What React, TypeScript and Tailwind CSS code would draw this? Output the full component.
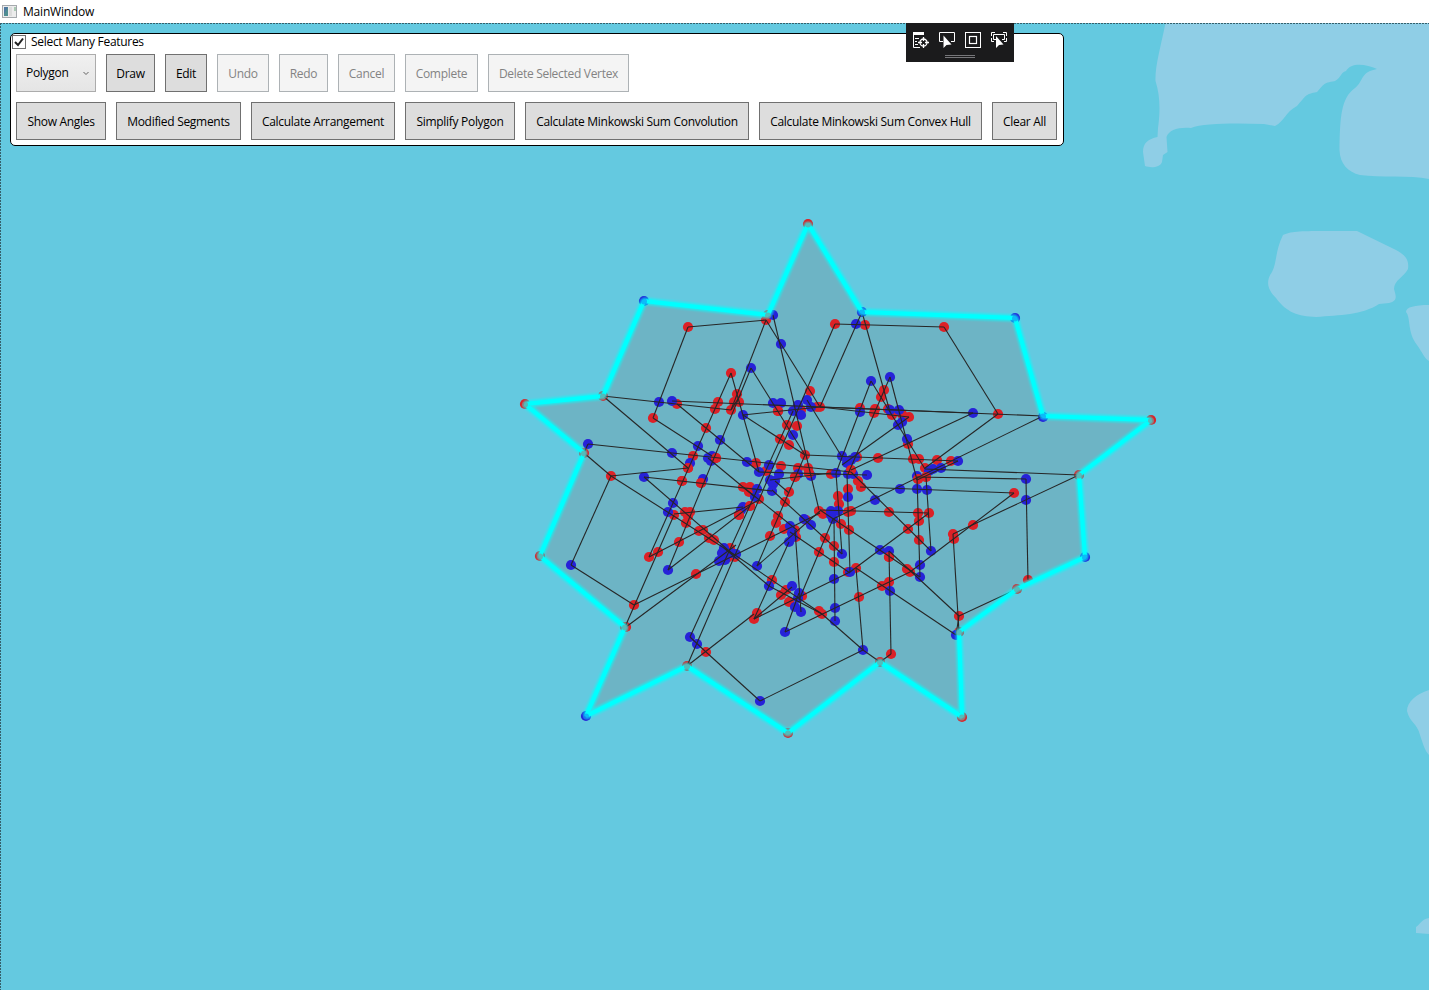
import { ReactNode } from 'react';

type Pt = [number, number];

const outline: Pt[] = [
  [808, 224], [862, 312], [1015, 318], [1043, 416], [1151, 420], [1079, 475], [1085, 557],
  [1017, 589], [959, 632], [962, 717], [880, 662], [788, 733], [687, 666], [586, 716],
  [625, 627], [540, 556], [584, 453], [525, 404], [603, 396], [644, 301], [768, 315],
];

const red: Pt[] = [
  [808, 224], [1151, 420], [1079, 475], [1017, 589], [959, 632], [962, 717], [880, 662], [788, 733],
  [687, 666], [625, 627], [540, 556], [584, 453], [525, 404], [603, 396], [768, 315],
  [688, 327], [653, 418], [677, 404], [766, 320], [835, 324], [865, 325], [944, 327], [998, 414],
  [731, 373], [737, 394], [718, 402], [734, 402], [739, 402], [715, 409], [731, 410], [706, 428],
  [693, 456], [688, 468], [716, 458], [682, 481], [701, 483], [743, 487], [750, 487], [749, 492],
  [759, 499], [756, 463], [766, 471], [781, 466], [798, 468], [808, 468], [795, 477], [809, 473],
  [805, 455], [789, 445], [780, 439], [787, 425], [797, 426], [778, 411], [810, 391], [789, 492],
  [785, 502], [817, 407], [820, 407], [801, 410], [860, 408], [875, 409], [874, 413], [884, 390],
  [881, 397], [892, 415], [909, 417], [902, 414], [888, 409], [857, 457], [878, 458], [908, 444],
  [913, 459], [919, 459], [937, 460], [951, 461], [925, 468], [918, 479], [926, 477], [851, 470],
  [831, 474], [858, 481], [861, 487], [848, 489], [838, 496], [839, 504], [674, 515], [685, 512],
  [690, 512], [688, 516], [686, 523], [679, 542], [699, 531], [703, 530], [709, 538], [714, 540],
  [649, 557], [658, 552], [696, 574], [634, 605], [739, 515], [750, 506], [730, 548], [735, 557],
  [727, 558], [770, 536], [776, 523], [778, 516], [784, 529], [772, 580], [781, 595], [786, 590],
  [789, 602], [757, 613], [754, 619], [802, 596], [796, 537], [795, 530], [819, 511], [823, 514],
  [851, 511], [848, 512], [841, 524], [849, 530], [825, 538], [834, 546], [819, 552], [834, 562],
  [856, 568], [848, 572], [859, 597], [882, 586], [889, 582], [889, 557], [907, 569], [910, 572],
  [919, 540], [908, 529], [919, 521], [918, 513], [929, 513], [889, 512], [953, 534], [954, 539],
  [973, 525], [959, 616], [819, 611], [822, 614], [806, 520], [611, 476], [706, 652], [626, 627],
  [891, 654], [1014, 493], [1028, 580],
];

const blue: Pt[] = [
  [862, 312], [1015, 318], [1043, 417], [1085, 557], [586, 716], [644, 301], [956, 635],
  [773, 315], [781, 344], [856, 324], [659, 402], [672, 401], [751, 368], [743, 415], [773, 403],
  [781, 403], [798, 405], [793, 411], [801, 415], [807, 400], [811, 407], [793, 435], [720, 440],
  [698, 446], [672, 453], [644, 477], [690, 463], [708, 458], [712, 456], [711, 461], [703, 479],
  [747, 462], [759, 472], [769, 465], [779, 474], [770, 480], [775, 481], [773, 484], [772, 491],
  [757, 489], [755, 497], [798, 474], [811, 476], [673, 503], [871, 381], [890, 377], [860, 412],
  [973, 413], [890, 410], [899, 410], [898, 425], [902, 422], [907, 439], [842, 456], [855, 457],
  [847, 463], [851, 460], [836, 473], [848, 474], [853, 474], [867, 475], [958, 461], [941, 468],
  [933, 469], [929, 471], [917, 476], [900, 489], [917, 489], [927, 490], [875, 500], [848, 497],
  [668, 512], [668, 570], [743, 507], [741, 510], [724, 548], [722, 553], [719, 561], [725, 560],
  [736, 554], [731, 553], [757, 566], [769, 586], [792, 586], [799, 593], [798, 598], [795, 607],
  [801, 612], [790, 526], [792, 533], [789, 542], [793, 537], [804, 519], [811, 525], [831, 511],
  [838, 511], [833, 519], [831, 515], [842, 554], [880, 550], [889, 551], [931, 551], [920, 565],
  [920, 577], [850, 572], [834, 579], [835, 608], [835, 621], [890, 591], [588, 444], [571, 565],
  [690, 637], [697, 644], [785, 632], [760, 701], [863, 650], [1026, 479], [1026, 500],
];

/* Red nodes that sit on top of neighbouring blue ones in crowded spots. */
const redFront: Pt[] = [
  [716, 458], [851, 470], [688, 468], [701, 483], [795, 477], [809, 473], [682, 481], [739, 515],
  [926, 477], [918, 479], [889, 557], [750, 506], [778, 411],
];

const segments: [number, number, number, number][] = [
  [688, 327, 766, 320], [688, 327, 653, 418], [603, 396, 731, 410], [672, 401, 1043, 416],
  [603, 396, 688, 468], [653, 418, 712, 456], [677, 404, 759, 472], [611, 476, 688, 468],
  [588, 444, 851, 472], [611, 476, 735, 555], [735, 555, 822, 614], [644, 477, 772, 491],
  [644, 477, 735, 556], [731, 373, 649, 557], [751, 368, 668, 570], [766, 320, 731, 410],
  [741, 394, 731, 410], [731, 373, 759, 472], [751, 368, 805, 455], [743, 415, 805, 455],
  [743, 415, 820, 407], [773, 315, 819, 510], [766, 320, 820, 407], [835, 324, 687, 666],
  [793, 411, 690, 637], [862, 312, 820, 407], [805, 455, 757, 566], [807, 400, 842, 457],
  [871, 381, 836, 473], [871, 381, 925, 469], [890, 377, 848, 474], [890, 377, 917, 480],
  [862, 312, 890, 412], [835, 324, 944, 327], [944, 327, 998, 414], [998, 414, 925, 468],
  [973, 413, 851, 470], [820, 407, 973, 413], [820, 407, 909, 417], [909, 417, 842, 465],
  [1043, 416, 833, 519], [805, 455, 958, 461], [759, 472, 867, 475], [770, 480, 831, 473],
  [1079, 475, 925, 469], [1026, 479, 917, 477], [1014, 493, 860, 487], [1026, 479, 1028, 580],
  [1079, 475, 953, 534], [1014, 493, 910, 572], [910, 572, 785, 632], [953, 534, 959, 632],
  [917, 477, 920, 577], [926, 477, 931, 551], [931, 551, 851, 472], [820, 510, 929, 513],
  [929, 513, 850, 572], [820, 510, 920, 577], [889, 551, 959, 616], [856, 568, 956, 635],
  [889, 551, 891, 654], [856, 568, 863, 650], [863, 650, 760, 701], [834, 519, 835, 621],
  [847, 474, 850, 572], [836, 473, 842, 554], [772, 490, 842, 554], [743, 487, 797, 530],
  [708, 458, 755, 497], [958, 461, 917, 480], [833, 519, 799, 600], [790, 532, 850, 573],
  [795, 530, 801, 612], [850, 572, 754, 619], [754, 619, 792, 587], [649, 557, 759, 500],
  [668, 570, 750, 506], [634, 605, 820, 513], [626, 627, 736, 545], [674, 514, 743, 507],
  [757, 566, 820, 511], [785, 632, 799, 593], [789, 542, 754, 619], [706, 652, 760, 701],
  [690, 637, 706, 652], [687, 666, 754, 614], [571, 565, 611, 476], [571, 565, 634, 605],
  [674, 515, 625, 627], [584, 453, 611, 476], [584, 453, 588, 444], [959, 616, 1017, 589],
  [822, 614, 863, 650], [863, 650, 880, 662], [724, 548, 769, 586], [769, 586, 822, 614],
  [880, 662, 891, 654], [956, 635, 959, 616], [789, 493, 775, 481],
];

const outlinePoints = outline.map((p) => p.join(',')).join(' ');

const near = ([ax, ay]: Pt, [bx, by]: Pt) => Math.abs(ax - bx) < 2 && Math.abs(ay - by) < 2;

function Nodes({ points, fill }: { points: Pt[]; fill: string }) {
  return (
    <g fill={fill}>
      {points.map(([x, y], i) => (
        <circle key={i} cx={x} cy={y} r="5.100" />
      ))}
    </g>
  );
}

function MapView() {
  return (
    <svg className="absolute inset-0 block" width="1429" height="967" viewBox="0 23 1429 967">
      <defs>
        <filter id="glow" x="-5%" y="-5%" width="110%" height="110%">
          <feGaussianBlur stdDeviation="1.2" />
        </filter>
      </defs>
      <g fill="#8fcee6">
        <path d="M1165.500 23C1160 50 1155 66 1155.500 81C1160 95 1160.500 110 1158 128L1157.500 137C1148 139 1143 143 1143 152L1145 166C1150 168 1160 168 1162 162L1163 155L1167.500 152L1166.500 137C1169 130 1178 127 1191 128C1203 123 1236 123 1264 124L1275 126C1285 121 1285 112 1297 106C1306 96 1305 94 1317 92C1324 85 1322 83 1335 81C1342 77 1340 73 1346 71C1351 62 1366 64 1377 69C1360 72 1364 81 1355 88C1341 98 1340 117 1339.500 150C1340 164 1348 172 1360 175C1380 178 1410 175 1429 179V23Z" />
        <path d="M1283 235C1292 230 1310 231 1357 231L1396 250C1407 256 1409 261 1408 269C1404 277 1394 280 1394 289C1396 296 1398 301 1389 303L1379 304C1362 315 1340 315 1316 317C1298 316 1287 313 1276 298C1268 290 1265 282 1272 272C1277 263 1275 251 1283 235Z" />
        <path d="M1429 305C1415 305 1406 307 1406 312C1411 318 1407 332 1417 345C1422 352 1425 359 1429 361Z" />
        <path d="M1429 690C1416 694 1407 702 1407 711C1410 723 1417 723 1420 735C1423 744 1425 751 1429 755Z" />
        <path d="M1429 918C1420 920 1421 924 1416 927V933L1429 934Z" />
      </g>
      <polygon points={outlinePoints} fill="#6db4c5" />
      <Nodes points={red} fill="#dc2127" />
      <Nodes points={blue} fill="#2622d8" />
      <Nodes points={redFront} fill="#dc2127" />
      <g stroke="#262626" strokeWidth="1.100">
        {segments.map(([x1, y1, x2, y2], i) => (
          <line key={i} x1={x1} y1={y1} x2={x2} y2={y2} />
        ))}
      </g>
      <polygon points={outlinePoints} fill="none" stroke="#00ffff" strokeOpacity="0.7" strokeWidth="7" strokeLinejoin="bevel" filter="url(#glow)" />
      <polygon points={outlinePoints} fill="none" stroke="#00ffff" strokeWidth="4" strokeLinejoin="bevel" />
      {outline.map((p, i) => (
        <circle
          key={i}
          cx={p[0]}
          cy={p[1] + 0.5}
          r="3"
          fill={blue.some((b) => near(b, p)) ? '#1496f4' : '#7d9a98'}
          fillOpacity="0.65"
        />
      ))}
      <path d="M0 23.500H1429M.5 23V990" fill="none" stroke="#35606b" strokeDasharray="2 1" />
    </svg>
  );
}

function Button({ w, disabled, children }: { w: string; disabled?: boolean; children: ReactNode }) {
  return (
    <button
      disabled={disabled}
      className={`${w} h-[38px] shrink-0 border pt-px whitespace-nowrap ${
        disabled ? 'border-[#adb2b5] bg-[#f4f4f4] text-[#838383]' : 'border-[#707070] bg-[#dddddd] text-black'
      }`}
    >
      {children}
    </button>
  );
}

function DebugBar() {
  return (
    <div className="absolute top-0 left-[906px] h-[39px] w-[108px] bg-[#1b1b1c]">
      <svg width="108" height="39" viewBox="906 23 108 39" fill="none" stroke="#fff" strokeWidth="1">
        <path d="M913 32H924V35H913Z" fill="#fff" stroke="none" />
        <path d="M913.500 33V47.500H920M915 38.500H919M915 41.500H917M915 44.500H918" />
        <circle cx="923.500" cy="42.500" r="3.500" strokeWidth="1.300" />
        <path d="M923.500 37V41M923.500 44V48M918 42.500H922M925 42.500H929" strokeWidth="1.300" />
        <path d="M943 41.500H939.500V32.500H954.500V41.500H951" />
        <path d="M943.500 35.500V48L946.500 45L951.500 44.500Z" fill="#fff" stroke="none" />
        <rect x="965.500" y="32.500" width="15" height="15" />
        <rect x="969.500" y="36.500" width="7" height="7" strokeWidth="1.200" />
        <path d="M991.500 36V32.500H995M1003 32.500H1006.500V36M991.500 38V41.500H994M1006.500 38V41.500H1004M996 39.500H993.500V34.500H1004.500V39.500H1002" />
        <path d="M996 36V48L999 45L1003.500 44.500Z" fill="#fff" stroke="none" />
        <path d="M945 55.500H975M945 57.500H975" stroke="#77777a" />
      </svg>
    </div>
  );
}

export default function App() {
  return (
    <div className="flex h-[990px] w-[1429px] flex-col overflow-hidden bg-white font-['Open_Sans','Noto_Sans',sans-serif] text-[12px] leading-4 tracking-[-0.3px] text-black">
      <header className="flex h-[23px] shrink-0 items-center gap-[5px] pl-[2px] tracking-[-0.2px]">
        <svg width="16" height="14" viewBox="0 0 16 14">
          <rect x=".5" y=".5" width="14" height="12" fill="#ececec" stroke="#a5a9ad" />
          <rect x="2" y="2" width="4" height="9" fill="#4f8d91" />
          <path d="M2 2H6L2 9Z" fill="#4e78a0" />
          <path d="M7 2H10V11H7Z" fill="#dcdcdc" />
          <path d="M13 2V6" stroke="#69a77c" />
        </svg>
        <span>MainWindow</span>
      </header>
      <main className="relative flex-1 bg-[#64c9e0] pt-[10px] pl-[10px]">
        <MapView />
        <section className="relative h-[113px] w-[1054px] rounded-[5px] border border-black bg-white">
          <label className="flex h-4 items-center gap-[5px] pl-px">
            <svg width="14" height="14" viewBox="0 0 14 14" fill="none">
              <rect x=".5" y=".5" width="13" height="13" fill="#fff" stroke="#707070" />
              <path d="M3 7L6 10L11 3.500" stroke="#212121" strokeWidth="2" />
            </svg>
            <span>Select Many Features</span>
          </label>
          <div className="mt-[4px] ml-[5px] flex gap-[10px]">
            <button className="flex h-[38px] w-[80px] shrink-0 items-center justify-between border border-[#acacac] bg-linear-to-b from-[#f0f0f0] to-[#e5e5e5] pr-[6px] pl-[9px]">
              <span>Polygon</span>
              <svg width="6" height="5" viewBox="0 0 6 5" fill="none" stroke="#606060">
                <path d="M.5 1L3 3.500L5.500 1" />
              </svg>
            </button>
            <Button w="w-[49px]">Draw</Button>
            <Button w="w-[42px]">Edit</Button>
            <Button w="w-[52px]" disabled>Undo</Button>
            <Button w="w-[49px]" disabled>Redo</Button>
            <Button w="w-[57px]" disabled>Cancel</Button>
            <Button w="w-[73px]" disabled>Complete</Button>
            <Button w="w-[141px]" disabled>Delete Selected Vertex</Button>
          </div>
          <div className="mt-[10px] ml-[5px] flex gap-[10px]">
            <Button w="w-[90px]">Show Angles</Button>
            <Button w="w-[125px]">Modified Segments</Button>
            <Button w="w-[144px]">Calculate Arrangement</Button>
            <Button w="w-[110px]">Simplify Polygon</Button>
            <Button w="w-[224px]">Calculate Minkowski Sum Convolution</Button>
            <Button w="w-[223px]">Calculate Minkowski Sum Convex Hull</Button>
            <Button w="w-[65px]">Clear All</Button>
          </div>
        </section>
        <DebugBar />
      </main>
    </div>
  );
}
